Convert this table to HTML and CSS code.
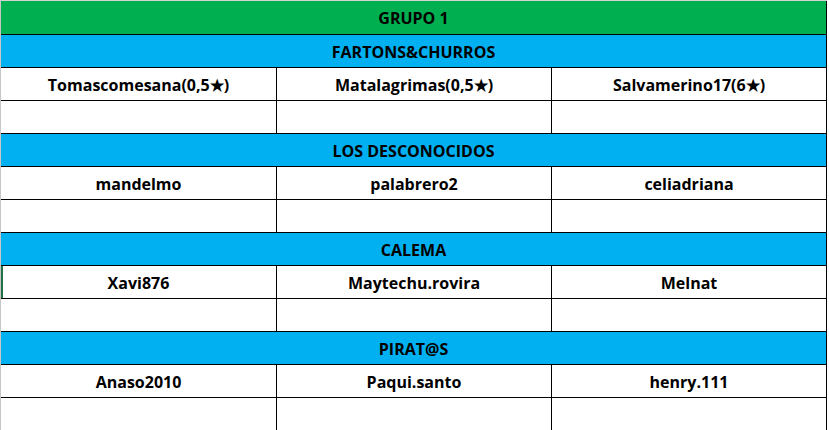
FILE: index.html
```html
<!DOCTYPE html>
<html>
<head>
<meta charset="utf-8">
<link rel="stylesheet" href="styles.css">
</head>
<body>
<div class="sheet">
  <div class="row full title">GRUPO 1</div>

  <div class="row full team">FARTONS&amp;CHURROS</div>
  <div class="row trio">
    <div class="cell">Tomascomesana(0,5★)</div>
    <div class="cell">Matalagrimas(0,5★)</div>
    <div class="cell">Salvamerino17(6★)</div>
  </div>
  <div class="row trio">
    <div class="cell"></div><div class="cell"></div><div class="cell"></div>
  </div>

  <div class="row full team">LOS DESCONOCIDOS</div>
  <div class="row trio">
    <div class="cell">mandelmo</div>
    <div class="cell">palabrero2</div>
    <div class="cell">celiadriana</div>
  </div>
  <div class="row trio">
    <div class="cell"></div><div class="cell"></div><div class="cell"></div>
  </div>

  <div class="row full team">CALEMA</div>
  <div class="row trio">
    <div class="cell selected">Xavi876</div>
    <div class="cell">Maytechu.rovira</div>
    <div class="cell">Melnat</div>
  </div>
  <div class="row trio">
    <div class="cell"></div><div class="cell"></div><div class="cell"></div>
  </div>

  <div class="row full team">PIRAT@S</div>
  <div class="row trio">
    <div class="cell">Anaso2010</div>
    <div class="cell">Paqui.santo</div>
    <div class="cell">henry.111</div>
  </div>
  <div class="row trio">
    <div class="cell"></div><div class="cell"></div><div class="cell"></div>
  </div>
</div>
</body>
</html>
```

FILE: styles.css
```css
html, body {
  margin: 0;
  padding: 0;
  background: #ffffff;
  overflow: hidden;
}

.sheet {
  width: 826px;
  border-top: 1px solid #d4d4d4;
  border-left: 1px solid #c6c6c6;
  font-family: "Open Sans", "Liberation Sans", sans-serif;
  font-weight: 700;
  font-size: 16px;
  color: #000000;
}

.row {
  height: 32px;
  border-bottom: 1px solid #000000;
  box-sizing: content-box;
}

.full {
  display: flex;
  align-items: center;
  justify-content: center;
  border-right: 1px solid #000000;
  width: 825px;
  padding-top: 1px;
  height: 31px;
}

.title {
  background: #00b050;
  height: 32px;
}

.team {
  background: #00b0f0;
}

.trio {
  display: grid;
  grid-template-columns: 276px 275px 275px;
}

.cell {
  display: flex;
  align-items: center;
  justify-content: center;
  border-right: 1px solid #000000;
  padding-top: 1px;
  height: 31px;
  white-space: nowrap;
}

.selected {
  box-shadow: inset 2px 0 0 #217346;
}
```
